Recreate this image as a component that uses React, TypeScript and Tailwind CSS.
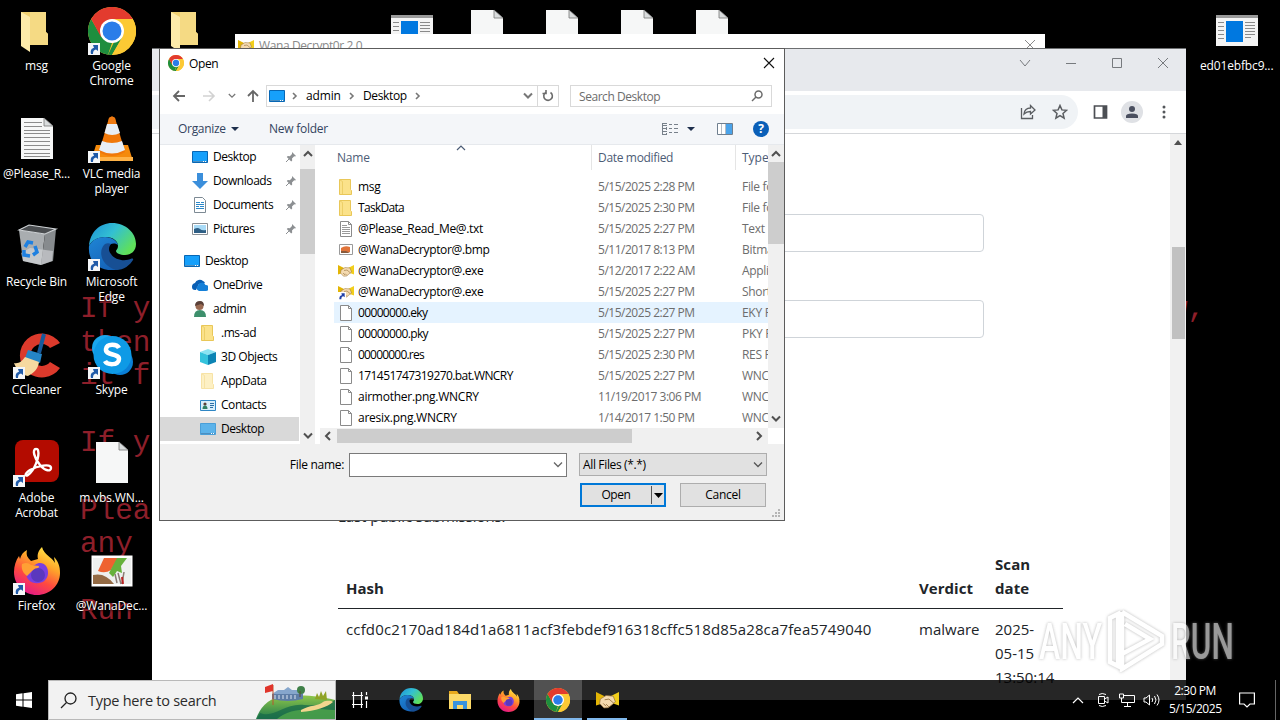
import React from "react";

type P = { className?: string };

function Chrome({ className = "size-12" }: P) {
  return (
    <svg viewBox="0 0 48 48" className={className}>
      <circle cx="24" cy="24" r="24" fill="#fcc934" />
      <path d="M3.200 12 13.600 30 24 36l-4 11.700A24 24 0 0 1 3.200 12z" fill="#1e8e3e" />
      <path d="M34.400 30 24 48l-4-.300L26 35z" fill="#1e8e3e" />
      <path d="M24 12h20.800A24 24 0 0 1 24 48l10.400-18z" fill="#fcc934" />
      <path d="M3.200 12A24 24 0 0 1 44.800 12H24L13 30z" fill="#e33b2e" />
      <circle cx="24" cy="24" r="12" fill="#fff" />
      <circle cx="24" cy="24" r="9.500" fill="#2b7de9" />
    </svg>
  );
}

function Edge({ className = "size-12" }: P) {
  return (
    <svg viewBox="0 0 48 48" className={className}>
      <defs>
        <linearGradient id="eTop" x1="0" y1="0" x2="1" y2="0.600">
          <stop offset="0" stopColor="#1b8fd8" />
          <stop offset="0.500" stopColor="#33c0d2" />
          <stop offset="1" stopColor="#5fe05a" />
        </linearGradient>
        <linearGradient id="eLow" x1="0" y1="0" x2="0.700" y2="1">
          <stop offset="0" stopColor="#1f86d6" />
          <stop offset="1" stopColor="#1460b5" />
        </linearGradient>
      </defs>
      <path d="M1 23C2 9 12 0 24 0c14 0 24 10 24 21 0 7-5 11-11 11-5 0-9-2-9-4 0-1 2-2 2-5 0-5-5-9-12-9C9 14 3 18 1 23z" fill="url(#eTop)" />
      <path d="M1 23c3-6 9-9 16-9 7 0 12 4 13 8-2-2-8-3-11 3-4 8 2 17 10 19 2 .600 4 1 6 .500C23 51-1 46 1 23z" fill="url(#eLow)" />
      <path d="M17 21c-7 6-5 21 11 26 8 0 14-5 17-10 .600-1-.300-2-1.400-1.400-7 3.400-17 1.400-21-5C20 27 21 23 23 21c-2-1-4-1-6 0z" fill="#174f94" />
    </svg>
  );
}

function Firefox({ className = "size-12" }: P) {
  return (
    <svg viewBox="0 0 48 48" className={className}>
      <defs>
        <linearGradient id="ff" x1="0.800" y1="0" x2="0.300" y2="1">
          <stop offset="0" stopColor="#fff04a" />
          <stop offset="0.350" stopColor="#ffa52a" />
          <stop offset="0.650" stopColor="#ff4a3f" />
          <stop offset="1" stopColor="#e3188a" />
        </linearGradient>
      </defs>
      <path d="M29 0c-4 4-5 8-4 12l-7 2c-4-4-5-6-4-11-4 2-6 5-7 9L6 9C3 13 1 19 1 25c0 13 10 23 23 23s23-10 23-22c0-7-2-12-6-16l1 6C39 10 31 8 29 0z" fill="url(#ff)" />
      <path d="M22 18c6-5 14 0 13 9-1 7-7 10-13 9-7-1-10-7-8-12 1-3 4-4 8-6z" fill="#7a3fe0" />
      <path d="M9 17c4-2 7-1 9 1l8 1c0 3-4 4-7 5l-5 5c-4-3-6-7-5-12z" fill="#ffa034" />
      <circle cx="25" cy="28" r="7" fill="#5b38bd" />
    </svg>
  );
}

function Vlc() {
  return (
    <svg viewBox="0 0 48 48" className="size-12">
      <path d="M8 30h32l5 16H3z" fill="#f58a0b" />
      <path d="M3 42h42v4H3z" fill="#ffb347" />
      <path d="M21 3q3-3 6 0l10 34q-13 8-26 0z" fill="#f0780a" />
      <path d="M19 9h10l3 9q-8 4-15.500 0z" fill="#e8eef5" />
      <path d="M14 26q10 4 20 0l3 9q-13 7-26 0z" fill="#e8eef5" />
      <path d="M21 3q3-3 6 0l1 5q-4 2-8 0z" fill="#ee7a12" />
    </svg>
  );
}

function Bin() {
  return (
    <svg viewBox="0 0 48 48" className="size-12">
      <path d="M6 7 32 11l-4 31-18-4z" fill="#a9adb0" />
      <path d="m32 11 11-5-3 32-12 4z" fill="#878b8e" />
      <path d="M6 7 16 2l27 4-11 5z" fill="#4a4d50" stroke="#cfd3d6" strokeWidth="1.200" />
      <path d="m8 30 9-5 23 3-1 10-11 4-18-4z" fill="#d8dadd" opacity=".6" />
      <g fill="none" stroke="#1f80e0" strokeWidth="3.500">
        <path d="m12 24 3-5 5 1" />
        <path d="m22 23 2 6-4 3" />
        <path d="m17 33-6-1v-5" />
      </g>
    </svg>
  );
}

function CCleaner() {
  return (
    <svg viewBox="0 0 48 48" className="size-12">
      <path d="M47 12A22 22 0 1 0 47 37l-10-6a11 11 0 1 1 0-14z" fill="#dc3a2c" />
      <path d="M31 3 26 22" stroke="#175a9c" strokeWidth="4" />
      <path d="m15 19 14 4-2 9-15-5z" fill="#2585c7" />
      <path d="m12 26 14 5c-1 7-5 11-11 14C9 44 3 38 1 32c5 1 8-2 11-6z" fill="#f6d9a0" />
    </svg>
  );
}

function Skype() {
  return (
    <svg viewBox="0 0 48 48" className="size-12">
      <circle cx="17" cy="17" r="13" fill="#1aa7ee" />
      <circle cx="32" cy="31" r="13" fill="#0a7fd6" />
      <circle cx="24.500" cy="24" r="19" fill="#0e9ae6" />
      <path d="M31 17c-2-4-12-5-13 1-1 7 13 4 13 10 0 7-12 6-14 2" fill="none" stroke="#fff" strokeWidth="4.500" />
    </svg>
  );
}

function Acrobat() {
  return (
    <svg viewBox="0 0 48 48" className="size-12">
      <rect x="2" y="1" width="44" height="42" rx="8" fill="#b30b00" />
      <path d="M23 10c-4 0-2 9 4 16 5 6 11 7 11 3 0-5-14-2-21 2-6 4-5 7-2 5 6-4 12-18 10-25-.300-1-1-1-2-1z" fill="none" stroke="#fff" strokeWidth="2.400" />
    </svg>
  );
}

function Shortcut() {
  return (
    <svg viewBox="0 0 12 12" className="absolute bottom-0 left-0 size-3">
      <path d="M0 0h12v12H0z" fill="#f4f6f8" />
      <path d="M3 11C2 7 4 5 6 5L5 2h5v6L8 6.500C6 7 5 8 5 11z" fill="#1f5aa8" />
    </svg>
  );
}

function BigFolder() {
  return (
    <svg viewBox="0 0 48 48" className="size-12">
      <path d="M8 5h25v20l2 2v11H8z" fill="#f0d070" />
      <path d="M17 5h16v20l2 2v11H17z" fill="#f5da84" />
      <path d="m8 5 9 5v35l-9-6z" fill="#fdebaa" />
    </svg>
  );
}

function BigPage({ lines = false }: { lines?: boolean }) {
  return (
    <svg viewBox="0 0 48 48" className="size-12">
      <path d="M8 3h23l9 8v33H8z" fill="#f6f7f7" />
      <path d="M31 3v8h9z" fill="#d9dcdd" stroke="#777" strokeWidth=".8" />
      {lines &&
        [7, 11, 15, 18, 22, 26, 30, 34, 38, 41].map((y, i) => (
          <path key={y} d={`M11 ${y}.5H${i < 2 ? 29 : 37}`} stroke="#8b8b8b" />
        ))}
    </svg>
  );
}

function BigExe() {
  return (
    <svg viewBox="0 0 48 48" className="size-12">
      <path d="M3 8h42v31H3z" fill="#f4f4f4" />
      <path d="M3 8h42v3H3z" fill="#9a9a9a" />
      <path d="M13 14h17v21H13z" fill="#0078e0" />
      <path d="M5 15.500h6m-6 4h6m-6 4h6m-6 4h6m-6 4h6M32 15.500h10m-10 3h10m-10 3h10m-10 3h10m-10 3h10m-10 3h6" stroke="#8a8a8a" />
    </svg>
  );
}

function BigBmp() {
  return (
    <svg viewBox="0 0 48 48" className="size-12">
      <path d="M3.500 8.500h41v31h-41z" fill="#fff" />
      <path d="M5 11h38v26H5z" fill="#eef0ef" />
      <path d="M16 11h14l-7 12q-6 4-13 1z" fill="#ee6230" />
      <path d="M29 11h10l-6 8 1 7-5-2-4 6-4-4z" fill="#66b13c" />
      <path d="M5 28q12-3 21 9H5z" fill="#946b45" />
      <path d="m30 26 3 11m3-12-2 12m-7-10 2 9" stroke="#8a7a75" strokeWidth="1.500" />
      <path d="m34 30 1 7" stroke="#b22" strokeWidth="2" />
    </svg>
  );
}

function Shake({ className = "size-4" }: P) {
  return (
    <svg viewBox="0 0 16 16" className={className}>
      <path d="M0 2 6 5 4.500 10 0 11.500z" fill="#e3b505" />
      <path d="M16 2 10 5l2 5 4 1.500z" fill="#f2ce1b" />
      <path d="m3 7 4-2.500L12 5l1.500 4-5 4-3 .200L2.500 10z" fill="#f4dab0" stroke="#94703c" strokeWidth=".5" />
      <path d="m6 7.500 3-.500 3.500 3M7 12 5 10m4 2.500L7 10.500" stroke="#94703c" strokeWidth=".6" fill="none" />
    </svg>
  );
}

function Monitor({ soft = false }: { soft?: boolean }) {
  return (
    <svg viewBox="0 0 16 16" className="size-4">
      <path d="M.5 2.500h15v11H.5z" fill={soft ? "#5cb3ea" : "#16a0fb"} stroke={soft ? "#4a9fd8" : "#0767b5"} />
      <path d="M1 12.500h14" stroke="#4d8fc0" />
      <path d="M11 12.500h1m1 0h1" stroke="#fff" />
    </svg>
  );
}

function SmallFolder({ pale = false }: { pale?: boolean }) {
  return (
    <svg viewBox="0 0 16 16" className="size-4">
      <path d="M1.500.5h11v10l1 1v4h-12z" fill={pale ? "#fdf0c4" : "#fbe28a"} stroke={pale ? "#f7e3a6" : "#e9c758"} />
      <path d="m2 1 2.500 1.500V15" stroke={pale ? "#f7e3a6" : "#edcf68"} fill="none" />
    </svg>
  );
}

function SmallPage({ lines = false }: { lines?: boolean }) {
  return (
    <svg viewBox="0 0 16 16" className="size-4">
      <path d="M2.500.5h8l3 3v12h-11z" fill="#fff" stroke="#8a8a8a" />
      <path d="M10.500.5v3h3" fill="none" stroke="#8a8a8a" />
      {lines && <path d="M4 4.500h5m-5 2h8m-8 2h8m-8 2h8m-8 2h8" stroke="#9a9a9a" />}
    </svg>
  );
}

function Svg16({ children }: { children: React.ReactNode }) {
  return <svg viewBox="0 0 16 16" className="size-4">{children}</svg>;
}

const icons: Record<string, React.ReactNode> = {
  desktop: <Monitor />,
  desktopSoft: <Monitor soft />,
  folder: <SmallFolder />,
  pale: <SmallFolder pale />,
  page: <SmallPage />,
  txt: <SmallPage lines />,
  exe: <Shake />,
  lnk: (
    <span className="relative block">
      <Shake />
      <svg viewBox="0 0 12 12" className="absolute bottom-0 left-0 size-2">
        <path d="M0 0h12v12H0z" fill="#fff" />
        <path d="M2 11C2 6 4 5 6 5L5 2h5v6L8 6.500C6 7 5 8 5 11z" fill="#1f3fa8" />
      </svg>
    </span>
  ),
  bmp: (
    <Svg16>
      <path d="M1.500 2.500h13v10h-13z" fill="#fff" stroke="#9a9a9a" />
      <path d="M3 6q4-3 9-1v5l-9 1z" fill="#e0743a" />
      <path d="M3 9h5l4 2H3z" fill="#8a5a3a" />
    </Svg16>
  ),
  downloads: (
    <Svg16>
      <path d="M5 0h6v8h5l-8 8-8-8h5z" fill="#3b8fdb" />
    </Svg16>
  ),
  documents: (
    <Svg16>
      <path d="M2.500.5h8l3 3v12h-11z" fill="#fff" stroke="#7d8a94" />
      <path d="M4 5.500h4m1 0h3m-8 2h8m-8 2h3m1 0h4m-8 2h8" stroke="#2b88c9" />
    </Svg16>
  ),
  pictures: (
    <Svg16>
      <path d="M.5 2.500h15v11H.5z" fill="#fff" stroke="#8a8f94" />
      <path d="M2 4h12v8H2z" fill="#a9dbf7" />
      <path d="M2 8q4-2 6 0t6 1v3H2z" fill="#2f5f85" />
    </Svg16>
  ),
  onedrive: (
    <Svg16>
      <path d="M0 10a4 4 0 0 1 3-4 5 5 0 0 1 8-2 4 4 0 0 1 2 2L7 7 4 13H3a3 3 0 0 1-3-3z" fill="#0a5fb4" />
      <path d="M7 14a3 3 0 0 1-1-5.500 4 4 0 0 1 7.500-.500A3 3 0 0 1 14 14z" fill="#1580d8" />
    </Svg16>
  ),
  admin: (
    <Svg16>
      <path d="M2 16q0-7 6-7t6 7z" fill="#3d8f6c" />
      <circle cx="7.500" cy="5" r="4" fill="#9a6a52" />
      <path d="M3 5q0-5 5-5 4 0 4 5L9 3z" fill="#5a4038" />
    </Svg16>
  ),
  cube: (
    <Svg16>
      <path d="m0 3 8-3 8 3-8 3z" fill="#8be4f2" />
      <path d="m0 3 8 3v10l-8-3z" fill="#35c3dc" />
      <path d="m16 3-8 3v10l8-3z" fill="#0c84b4" />
    </Svg16>
  ),
  contacts: (
    <Svg16>
      <path d="M.5 3.500h15v10H.5z" fill="#d9effb" stroke="#2f86c4" />
      <circle cx="5" cy="7" r="1.600" fill="#5a4038" />
      <path d="M2.500 12q0-3.500 2.500-3.500T7.500 12z" fill="#2f7f62" />
      <path d="M10 6.500h4m-4 2h4m-4 2h3" stroke="#2f6fa4" />
    </Svg16>
  ),
};

function Pin() {
  return (
    <svg viewBox="0 0 12 12" className="size-3">
      <path d="m7 1 4 4-1 .500-.800-.300L7 7.500l.200 2-1 .900L1.800 6l1-1 2 .200L7 3z" fill="#8c8f92" />
      <path d="M4 8 1 11" stroke="#8c8f92" />
    </svg>
  );
}

function Chev({ className = "", d = "M1 2.500 5 6.500l4-4", w = 1.6 }: { className?: string; d?: string; w?: number }) {
  return (
    <svg viewBox="0 0 10 10" className={`size-2.5 shrink-0 ${className}`}>
      <path d={d} fill="none" stroke="currentColor" strokeWidth={w} />
    </svg>
  );
}
const RIGHT = "m3 2 3 3-3 3";
const LEFT = "M7 1 3 5l4 4";
const UP = "M1 7l4-4 4 4";

type App = { col: string; row: string; label: string; icon: React.ReactNode; link?: boolean };
const apps: App[] = [
  { col: "col-start-1", row: "row-start-1", label: "msg", icon: <BigFolder /> },
  { col: "col-start-1", row: "row-start-2", label: "@Please_R...", icon: <BigPage lines /> },
  { col: "col-start-1", row: "row-start-3", label: "Recycle Bin", icon: <Bin /> },
  { col: "col-start-1", row: "row-start-4", label: "CCleaner", icon: <CCleaner />, link: true },
  { col: "col-start-1", row: "row-start-5", label: "Adobe Acrobat", icon: <Acrobat />, link: true },
  { col: "col-start-1", row: "row-start-6", label: "Firefox", icon: <Firefox />, link: true },
  { col: "col-start-2", row: "row-start-1", label: "Google Chrome", icon: <Chrome />, link: true },
  { col: "col-start-2", row: "row-start-2", label: "VLC media player", icon: <Vlc />, link: true },
  { col: "col-start-2", row: "row-start-3", label: "Microsoft Edge", icon: <Edge />, link: true },
  { col: "col-start-2", row: "row-start-4", label: "Skype", icon: <Skype />, link: true },
  { col: "col-start-2", row: "row-start-5", label: "m.vbs.WN...", icon: <BigPage /> },
  { col: "col-start-2", row: "row-start-6", label: "@WanaDec...", icon: <BigBmp /> },
  { col: "col-start-3", row: "row-start-1", label: "", icon: <BigFolder /> },
  { col: "col-start-6", row: "row-start-1", label: "", icon: <BigExe /> },
  { col: "col-start-7", row: "row-start-1", label: "", icon: <BigPage /> },
  { col: "col-start-8", row: "row-start-1", label: "", icon: <BigPage /> },
  { col: "col-start-9", row: "row-start-1", label: "", icon: <BigPage /> },
  { col: "col-start-10", row: "row-start-1", label: "", icon: <BigPage /> },
  { col: "col-start-17", row: "row-start-1", label: "ed01ebfbc9...", icon: <BigExe /> },
];

function Desktop() {
  return (
    <div className="absolute top-[7px] -left-px grid grid-cols-[repeat(17,75px)] grid-rows-[repeat(6,108px)]">
      {apps.map((a, i) => (
        <div key={i} className={`flex flex-col items-center ${a.col} ${a.row}`}>
          <div className="relative size-12">
            {a.icon}
            {a.link && <Shortcut />}
          </div>
          <div className="mt-[3px] w-[73px] text-center text-[12px] leading-[15px] tracking-[-0.150px] text-white [text-shadow:0_1px_2px_#000]">
            {a.label}
          </div>
        </div>
      ))}
    </div>
  );
}

function Wallpaper() {
  return (
    <div className="absolute top-[293px] left-[80px] font-['Liberation_Mono',monospace] text-[29.300px] leading-[33.600px] whitespace-pre text-[#8e1f2a]">
      <p>{'If you see this text, but don\'t see the "Wana Decrypt0r" window,'}</p>
      <p>then your antivirus removed the decrypt software or you deleted</p>
      <p>it from your computer.</p>
      <p>&nbsp;</p>
      <p>If you need your files you have to run the decrypt software.</p>
      <p>&nbsp;</p>
      <p>{'Please find an application file named "@WanaDecryptor@.exe" in'}</p>
      <p>any folder or restore from the antivirus quarantine.</p>
      <p>&nbsp;</p>
      <p>Run and follow the instructions!</p>
    </div>
  );
}

function Browser() {
  return (
    <div className="absolute top-12 left-[152px] flex h-[652px] w-[1034px] flex-col overflow-hidden border-t border-[#6d6f71] bg-white">
      <div className="flex h-[42px] shrink-0 items-start bg-[#e7e9ed] pt-[8px] pl-[867px] text-[#777a7e]">
        <svg viewBox="0 0 160 12" className="h-3 w-40" fill="none" stroke="currentColor">
          <path d="m1 3 5 6 5-6M47 6.500h10M93.500 1.500h9v9h-9zM139 1l10 10m0-10-10 10" />
        </svg>
      </div>
      <div className="flex h-[43px] shrink-0 items-center border-b border-[#d5d7da]">
        <div className="flex h-[34px] w-[926px] items-center justify-end gap-4 rounded-r-full bg-[#f0f3f6] pr-[10px] pl-4 text-[#5a5d61]">
          <svg viewBox="0 0 16 16" className="size-4" fill="none" stroke="currentColor" strokeWidth="1.300">
            <path d="M1.500 4v10.500h11V11M4 10c.500-4 3-6 6.500-6V1.500L15 6l-4.500 4V7.500C8 7.500 6 8 4 10z" />
          </svg>
          <svg viewBox="0 0 16 16" className="size-4" fill="none" stroke="currentColor" strokeWidth="1.500">
            <path d="m8 1.500 1.900 4.400 4.700.400-3.600 3.100 1.100 4.700L8 11.600l-4.100 2.500L5 9.400 1.400 6.300l4.700-.400z" />
          </svg>
        </div>
        <svg viewBox="0 0 14 14" className="ml-[15px] h-3.5 w-[15px]">
          <path d="M1 1h12v12H1z" fill="none" stroke="#4c4f54" strokeWidth="1.700" />
          <path d="M9 1h4v12H9z" fill="#4c4f54" />
        </svg>
        <svg viewBox="0 0 22 22" className="ml-[13px] size-[22px]">
          <circle cx="11" cy="11" r="11" fill="#dfe1e5" />
          <circle cx="11" cy="8" r="3" fill="#4a4f5f" />
          <path d="M5 17v-2q0-2.500 6-2.500t6 2.500v2z" fill="#4a4f5f" />
        </svg>
        <svg viewBox="0 0 4 14" className="ml-[19px] h-3.5 w-1" fill="#54575b">
          <circle cx="2" cy="2" r="1.500" />
          <circle cx="2" cy="7" r="1.500" />
          <circle cx="2" cy="12" r="1.500" />
        </svg>
      </div>
      <div className="flex min-h-0 flex-1">
        <div className="flex-1 overflow-hidden pt-20 pl-[186px] text-[#212529]">
          <div className="h-[38px] w-[646px] rounded border border-[#cfd4d9]" />
          <div className="mt-12 h-[38px] w-[646px] rounded border border-[#cfd4d9]" />
          <p className="mt-[166px] h-6 text-[15px] leading-6 tracking-[-0.080px]">Last public submissions:</p>
          <table className="mt-[24px] w-[725px] table-fixed text-left text-[15px] leading-6">
            <thead>
              <tr className="border-b border-[#212529] align-bottom">
                <th className="w-[573px] px-2 pb-2">Hash</th>
                <th className="w-[76px] px-2 pb-2 tracking-[0.050px]">Verdict</th>
                <th className="px-2 pb-2 tracking-[0.100px]">Scan date</th>
              </tr>
            </thead>
            <tbody>
              <tr className="align-top">
                <td className="px-2 pt-[8px] tracking-[0.145px] whitespace-nowrap">
                  ccfd0c2170ad184d1a6811acf3febdef916318cffc518d85a28ca7fea5749040
                </td>
                <td className="px-2 pt-[8px]">malware</td>
                <td className="pt-[8px] pl-2 whitespace-nowrap">
                  2025-<br />05-15<br />13:50:14
                </td>
              </tr>
            </tbody>
          </table>
        </div>
        <div className="flex w-[16px] flex-col items-center bg-[#f1f1f1] pt-[6px]">
          <svg viewBox="0 0 8 5" className="h-[5px] w-2">
            <path d="m0 5 4-5 4 5z" fill="#505050" />
          </svg>
          <div className="mt-[102px] h-[92px] w-[13px] bg-[#c1c1c1]" />
        </div>
      </div>
    </div>
  );
}

type Nav = { pad: string; icon: string; label: string; pin?: boolean; sel?: boolean; gap?: boolean };
const nav: Nav[] = [
  { pad: "pl-8", icon: "desktop", label: "Desktop", pin: true },
  { pad: "pl-8", icon: "downloads", label: "Downloads", pin: true },
  { pad: "pl-8", icon: "documents", label: "Documents", pin: true },
  { pad: "pl-8", icon: "pictures", label: "Pictures", pin: true },
  { pad: "pl-6", icon: "desktop", label: "Desktop", gap: true },
  { pad: "pl-8", icon: "onedrive", label: "OneDrive" },
  { pad: "pl-8", icon: "admin", label: "admin" },
  { pad: "pl-10", icon: "folder", label: ".ms-ad" },
  { pad: "pl-10", icon: "cube", label: "3D Objects" },
  { pad: "pl-10", icon: "pale", label: "AppData" },
  { pad: "pl-10", icon: "contacts", label: "Contacts" },
  { pad: "pl-10", icon: "desktopSoft", label: "Desktop", sel: true },
];

const NARROW = "tracking-[-0.650px]";
const SNUG = "tracking-[-0.350px]";
const EVEN = "tracking-[-0.250px]";

const files: [string, string, string, string, string][] = [
  ["folder", "msg", "5/15/2025 2:28 PM", "File folder", EVEN],
  ["folder", "TaskData", "5/15/2025 2:30 PM", "File folder", "tracking-[-0.700px]"],
  ["txt", "@Please_Read_Me@.txt", "5/15/2025 2:27 PM", "Text Document", SNUG],
  ["bmp", "@WanaDecryptor@.bmp", "5/11/2017 8:13 PM", "Bitmap image", SNUG],
  ["exe", "@WanaDecryptor@.exe", "5/12/2017 2:22 AM", "Application", SNUG],
  ["lnk", "@WanaDecryptor@.exe", "5/15/2025 2:27 PM", "Shortcut", SNUG],
  ["page", "00000000.eky", "5/15/2025 2:27 PM", "EKY File", NARROW],
  ["page", "00000000.pky", "5/15/2025 2:27 PM", "PKY File", NARROW],
  ["page", "00000000.res", "5/15/2025 2:30 PM", "RES File", "tracking-[-0.800px]"],
  ["page", "171451747319270.bat.WNCRY", "5/15/2025 2:27 PM", "WNCRY File", "tracking-[-0.580px]"],
  ["page", "airmother.png.WNCRY", "11/19/2017 3:06 PM", "WNCRY File", EVEN],
  ["page", "aresix.png.WNCRY", "1/14/2017 1:50 PM", "WNCRY File", EVEN],
];

function NavBar() {
  return (
    <div className="flex h-[34px] shrink-0 items-center pl-3 text-[#6b6b6b]">
      <svg viewBox="0 0 14 12" className="h-3 w-3.5" fill="none" stroke="#666" strokeWidth="1.800">
        <path d="M13 6H2m5-5L2 6l5 5" />
      </svg>
      <svg viewBox="0 0 14 12" className="ml-4 h-3 w-3.5" fill="none" stroke="#d2d2d2" strokeWidth="1.600">
        <path d="M1 6h11M7 1l5 5-5 5" />
      </svg>
      <Chev className="ml-[12px] !size-2 text-[#777]" />
      <svg viewBox="0 0 12 14" className="ml-[11px] h-3.5 w-3" fill="none" stroke="#666" strokeWidth="1.800">
        <path d="M6 13V2M1 7l5-5 5 5" />
      </svg>
      <div className="ml-[7px] flex h-[22px] w-[293px] items-center border border-[#d9d9d9] pl-[2px] text-black">
        <Monitor />
        <Chev d={RIGHT} className="ml-[5px] text-[#777]" />
        <span className="ml-[6px] w-[34px] tracking-[-0.150px]">admin</span>
        <Chev d={RIGHT} className="ml-[7px] text-[#777]" />
        <span className="ml-[6px] w-[43px] tracking-[-0.350px]">Desktop</span>
        <Chev d={RIGHT} className="ml-[7px] text-[#777]" />
        <div className="flex h-full flex-1 items-center justify-end">
          <Chev className="mr-[4px] text-[#777]" w={2} />
          <span className="flex h-full w-[21px] items-center justify-center border-l border-[#d9d9d9]">
            <svg viewBox="0 0 12 12" className="size-3" fill="none" stroke="#6b6b6b" strokeWidth="1.600">
              <path d="M8.500 2.500A4.300 4.300 0 1 1 3.500 2.600M4 0v3.500H.5" />
            </svg>
          </span>
        </div>
      </div>
      <div className="ml-[11px] flex h-[22px] w-[202px] items-center justify-between border border-[#d9d9d9] pr-[8px] pl-[8px] text-[#6d6d6d]">
        <span className="mt-px tracking-[-0.450px]">Search Desktop</span>
        <svg viewBox="0 0 12 12" className="size-3" fill="none" stroke="#6b6b6b" strokeWidth="1.500">
          <circle cx="7.500" cy="4.500" r="3.500" />
          <path d="M5 7 1 11" />
        </svg>
      </div>
    </div>
  );
}

function OpenDialog() {
  return (
    <div className="absolute top-12 left-[159px] flex h-[473px] w-[626px] flex-col border border-[#5c5c5c] bg-white text-[12px] leading-4 whitespace-nowrap text-black">
      <div className="flex h-[30px] shrink-0 items-center pb-[2px] pl-[8px]">
        <Chrome className="size-4" />
        <span className="mt-px ml-[5px] tracking-[-0.400px]">Open</span>
        <svg viewBox="0 0 12 12" className="mr-[9px] ml-auto size-3" stroke="#111" strokeWidth="1.100">
          <path d="m1 1 10 10M11 1 1 11" />
        </svg>
      </div>
      <NavBar />
      <div className="mt-px flex h-[31px] shrink-0 items-center border-b border-[#e6e9ed] bg-[#f4f6f9] pl-[18px] text-[#33445f]">
        <span className="w-[53px] tracking-[-0.300px]">Organize</span>
        <svg viewBox="0 0 8 4" className="-mr-px h-1 w-2"><path d="M0 0h8L4 4z" fill="#1e2f4d" /></svg>
        <span className="ml-[31px] w-[60px] tracking-[-0.250px]">New folder</span>
        <svg viewBox="0 0 16 14" className="ml-[333px] h-3.5 w-4" stroke="#77808a">
          <path d="M.5 1v12M1 1.500h4m-4 2h4m-4 3h4m-4 3h4m-4 3h4M7 2.500h3m2 0h4m-9 4h3m2 0h4m-9 4h3m2 0h4" fill="none" />
          <path d="M4.500 1v12" strokeDasharray="1 1" />
        </svg>
        <svg viewBox="0 0 8 4" className="ml-[9px] h-1 w-2"><path d="M0 0h8L4 4z" fill="#1e2f4d" /></svg>
        <svg viewBox="0 0 16 12" className="ml-[22px] h-3 w-4">
          <path d="M.5.5h15v11H.5z" fill="#fff" stroke="#6f7f8f" />
          <path d="M9 1h6v10H9z" fill="#4aa3ea" />
          <path d="M4.500 1v10M8.500 1v10" stroke="#b5bcc4" />
        </svg>
        <span className="ml-[20px] flex size-4 items-center justify-center rounded-full bg-[#0a5fb8] text-[12px] font-bold text-white">?</span>
      </div>
      <div className="flex h-[299px] shrink-0">
        <div className="w-[140px]">
          {nav.map((n, i) => (
            <div key={i} className={`flex h-6 w-[139px] items-center ${n.pad} ${n.gap ? "mt-2" : ""} ${n.sel ? "bg-[#d9d9d9]" : ""}`}>
              {icons[n.icon]}
              <span className="ml-[5px] tracking-[-0.450px]">{n.label}</span>
              {n.pin && <span className="mr-[2px] ml-auto"><Pin /></span>}
            </div>
          ))}
        </div>
        <div className="flex w-[15px] flex-col items-center bg-[#f0f0f0] text-[#505050]">
          <Chev d={UP} className="mt-[4px]" w={2} />
          <div className="mt-[10px] h-[85px] w-full bg-[#cdcdcd]" />
          <Chev className="mt-auto mb-[3px]" w={2} />
        </div>
        <div className="ml-[5px] flex w-[464px] flex-col">
          <div className="flex h-[283px]">
            <div className="w-[448px] overflow-hidden pl-[14px]">
              <div className="relative flex h-[25px] items-center text-[#4c5c76]">
                <Chev d={UP} w={1.2} className="absolute -top-[2px] left-[122px]" />
                <span className="flex h-full w-[258px] shrink-0 items-center border-r border-[#e5e5e5] pl-[3px] tracking-[-0.200px]">Name</span>
                <span className="flex h-full w-[144px] shrink-0 items-center border-r border-[#e5e5e5] pl-[6px] tracking-[-0.330px]">Date modified</span>
                <span className="pl-[6px]">Type</span>
              </div>
              <div className="pt-[6px]">
                {files.map(([ic, name, date, kind, fit], i) => (
                  <div key={i} className={`flex h-[21px] items-center text-[#6d6d6d] ${i === 6 ? "bg-[#e5f3ff]" : ""}`}>
                    <span className="ml-[4px] shrink-0">{icons[ic]}</span>
                    <span className={`mt-px ml-[4px] w-[240px] shrink-0 text-black ${fit}`}>{name}</span>
                    <span className="mt-px w-[144px] shrink-0 tracking-[-0.480px]">{date}</span>
                    <span className="mt-px shrink-0 tracking-[-0.300px]">{kind}</span>
                  </div>
                ))}
              </div>
            </div>
            <div className="flex w-[16px] shrink-0 flex-col items-center bg-[#f0f0f0] text-[#505050]">
              <Chev d={UP} className="mt-[4px]" w={2} />
              <div className="mt-[3px] h-[82px] w-full bg-[#cdcdcd]" />
              <Chev className="mt-auto mb-[4px]" w={2} />
            </div>
          </div>
          <div className="flex h-[16px] w-[448px] items-center bg-[#f0f0f0] text-[#505050]">
            <Chev d={LEFT} className="ml-[3px]" w={2} />
            <div className="ml-[4px] h-[14px] w-[295px] bg-[#cdcdcd]" />
            <Chev d="m3 1 4 4-4 4" className="mr-[4px] ml-auto" w={2} />
          </div>
        </div>
      </div>
      <div className="flex flex-1 flex-col bg-[#f0f0f0]">
        <div className="mt-[9px] flex h-6 items-start">
          <span className="w-[189px] pt-1 pr-[5px] text-right tracking-[-0.300px]">File name:</span>
          <div className="flex h-6 w-[218px] items-center justify-end border border-[#7a7a7a] bg-white pr-[3px]">
            <Chev className="text-[#666]" w={1.3} />
          </div>
          <div className="ml-[12px] flex h-[23px] w-[188px] items-center justify-between border border-[#adadad] bg-[#e1e1e1] pr-[3px] pl-[3px]">
            <span className="tracking-[-0.350px]">All Files (*.*)</span>
            <Chev className="text-[#555]" w={1.3} />
          </div>
        </div>
        <div className="mt-[6px] flex h-6 pl-[420px]">
          <div className="flex h-6 w-[86px] items-center border-2 border-[#0078d7] bg-[#e1e1e1]">
            <span className="w-[69px] pr-px text-center tracking-[-0.400px]">Open</span>
            <span className="h-[18px] border-l border-[#555]" />
            <svg viewBox="0 0 9 5" className="ml-[2px] h-[5px] w-[9px]"><path d="M0 0h9L4.500 5z" /></svg>
          </div>
          <div className="ml-[14px] flex h-6 w-[86px] items-center justify-center border border-[#adadad] bg-[#e1e1e1] tracking-[-0.250px]">Cancel</div>
        </div>
        <svg viewBox="0 0 9 9" className="mt-auto mr-[3px] mb-[2px] ml-auto size-[9px]" fill="#b5b5b5">
          <path d="M6 0h2v2H6zM6 3h2v2H6zM3 3h2v2H3zM0 6h2v2H0zM3 6h2v2H3zM6 6h2v2H6z" />
        </svg>
      </div>
    </div>
  );
}

function Hills() {
  return (
    <svg viewBox="0 0 80 38" className="h-[38px] w-20">
      <defs>
        <linearGradient id="hill" x1="0" y1="0" x2="0" y2="1">
          <stop offset="0" stopColor="#8fc64a" />
          <stop offset="1" stopColor="#1e7a4c" />
        </linearGradient>
      </defs>
      <path d="M1 38C5 27 12 18 25 16c20-3 40-1 55 3v19z" fill="url(#hill)" />
      <path d="M5 32c14 6 24-10 44-8 12 1 22 0 31-5v19H2z" fill="#17694a" opacity=".75" />
      <path d="M22 38c10-9 26-12 58-9v9z" fill="#4fa54a" opacity=".8" />
      <path d="M46 29c8-5 18-4 22-8 4-2 9-1 10 0-5 5-18 9-32 10z" fill="#f2d58e" />
      <path d="M17 13h31v5q-15 4-31 0z" fill="#5e7da6" />
      <path d="m17 13 6-4h6l4-3 4 3h6l6 4z" fill="#86a6cc" />
      <path d="M20 18v-4m4 4v-4m4 4v-4m4 4v-4m4 4v-4m4 4v-4" stroke="#dce6f2" />
      <circle cx="46" cy="9" r="4" fill="#3f8048" />
      <path d="M45 16v-6" stroke="#5a4a30" />
      <path d="m60 18 2-6 2 4 2-6 2 5 3-5 1 9z" fill="#8fa326" />
      <path d="M18 24V4" stroke="#b8572e" />
      <path d="m10 6 8-3v7l-8 2z" fill="#e0352b" />
    </svg>
  );
}

function Taskbar() {
  return (
    <div className="absolute bottom-0 left-0 flex h-10 w-full items-center bg-black/85 text-white">
      <div className="flex h-full w-12 items-center justify-center bg-black">
        <svg viewBox="0 0 16 16" className="size-4" fill="#fff">
          <path d="m0 2.200 6.500-.900v6.200H0zM7.500 1.200 16 0v7.500H7.500zM0 8.500h6.500v6.200L0 13.800zM7.500 8.500H16V16l-8.500-1.200z" />
        </svg>
      </div>
      <div className="flex h-full w-[288px] items-center border border-[#b9b9b9] bg-[#f2f2f2] pl-[11px] text-[#2b2b2b]">
        <svg viewBox="0 0 17 17" className="size-[17px]" fill="none" stroke="#222" strokeWidth="1.300">
          <circle cx="10.500" cy="6.500" r="5.500" />
          <path d="M6.500 10.500 1 16" />
        </svg>
        <span className="mt-px ml-[11px] w-[140px] text-[14.500px] tracking-[-0.260px] whitespace-nowrap">Type here to search</span>
        <div className="ml-auto"><Hills /></div>
      </div>
      <div className="flex h-full w-12 items-center justify-center">
        <svg viewBox="0 0 16 16" className="size-4" fill="none" stroke="#fff" strokeWidth="1.200">
          <path d="M0 3.500h11M0 12.500h11M1.500 3.500v9M9.500 3.500v9M1.500 3V0m8 3V0m-8 13v3m8-3v3M14.500 0v3m0 6v7" />
          <path d="M13 4.500h3v3h-3z" fill="#fff" stroke="none" />
        </svg>
      </div>
      <div className="flex h-full w-[52px] items-center justify-center pl-[2px]"><Edge className="size-6" /></div>
      <div className="flex h-full w-12 items-center justify-center">
        <svg viewBox="0 0 22 20" className="h-5 w-[22px]">
          <path d="M0 1h8l2 3h12v15H0z" fill="#e8a91c" />
          <path d="M0 4h22v15H0z" fill="#fcd968" />
          <path d="M4 19v-8h14v8h-4v-4H8v4z" fill="#3a93dd" />
        </svg>
      </div>
      <div className="flex h-full w-[50px] items-center justify-center pr-px"><Firefox className="size-[23px]" /></div>
      <div className="flex h-full w-12 items-center justify-center border-b-2 border-[#80b8ec] bg-white/20 pt-[2px]"><Chrome className="size-6" /></div>
      <div className="ml-[5px] flex h-full w-10 items-center justify-center border-b-2 border-[#80b8ec] pt-[2px]"><Shake className="size-[23px]" /></div>
      <div className="ml-auto flex h-full items-center">
        <svg viewBox="0 0 12 8" className="mr-[13px] h-2 w-3" fill="none" stroke="#fff" strokeWidth="1.200"><path d="m1 7 5-5 5 5" /></svg>
        <svg viewBox="0 0 12 16" className="mr-[10px] h-4 w-3" fill="none" stroke="#fff">
          <path d="M1.500 4.500h6v7h-6zM7.500 7l3.500-2v6L7.500 9M2 2.500q3-2 7 0m-7 11q3 2 7 0" />
        </svg>
        <svg viewBox="0 0 16 14" className="mr-[8px] h-3.5 w-4" fill="none" stroke="#fff">
          <path d="M5 2.500h10.500v7H2.500V6M8.500 10v3M5 13.500h7M.5 1h4v4h-4zM2.500 5v3" />
        </svg>
        <svg viewBox="0 0 17 14" className="mr-[9px] h-3.5 w-[17px]" fill="none" stroke="#fff">
          <path d="M1 5h2l3.500-3v10L3 9H1zM9 5q1.500 2 0 4M11.500 3q3 4 0 8M14 1.500q4 5.500 0 11" />
        </svg>
        <div className="w-[52px] text-center text-[12px] leading-[18px] tracking-[-0.480px] whitespace-nowrap">
          2:30 PM<br />5/15/2025
        </div>
        <svg viewBox="0 0 16 16" className="mr-[20px] ml-[18px] size-4" fill="none" stroke="#fff" strokeWidth="1.200">
          <path d="M.6 1h14.800v11H11l-3 3-3-3H.6z" />
        </svg>
        <div className="mr-[4px] h-full w-px bg-[#666]" />
      </div>
    </div>
  );
}

function Watermark() {
  return (
    <div className="absolute top-[608px] left-[1039px] flex h-16 w-[194px] items-center opacity-60 [filter:drop-shadow(0_0_1.500px_#888)]">
      <span className="mt-[3px] w-[64px] origin-left scale-x-[0.640] font-[Roboto,sans-serif] text-[50px] leading-none font-medium text-white">ANY</span>
      <svg viewBox="0 0 60 64" className="mx-[4px] h-16 w-[60px] shrink-0" fill="none" stroke="#fff" strokeWidth="4.500">
        <path d="M3 10v44l8 4V6zM15 4l40 24v8L15 61V46m0-42v42l28-15-25-15" />
      </svg>
      <span className="mt-[3px] w-[62px] origin-left scale-x-[0.630] font-[Roboto,sans-serif] text-[50px] leading-none font-medium text-white">RUN</span>
    </div>
  );
}

export default function App() {
  return (
    <div className="relative h-[720px] w-[1280px] overflow-hidden bg-black font-['Open_Sans','Noto_Sans',sans-serif]">
      <Wallpaper />
      <Desktop />
      <div className="absolute top-[34px] left-[235px] flex h-[200px] w-[810px] items-start bg-white pt-[4px] pr-[10px] pl-[3px] text-[12px] leading-4 text-[#8a8a8a]">
        <Shake />
        <span className="ml-[5px] tracking-[-0.400px]">Wana Decrypt0r 2.0</span>
        <svg viewBox="0 0 10 10" className="mt-[2px] ml-auto size-2.5" stroke="#8a8a8a"><path d="m0 0 10 10M10 0 0 10" /></svg>
      </div>
      <Browser />
      <OpenDialog />
      <Taskbar />
      <Watermark />
    </div>
  );
}
